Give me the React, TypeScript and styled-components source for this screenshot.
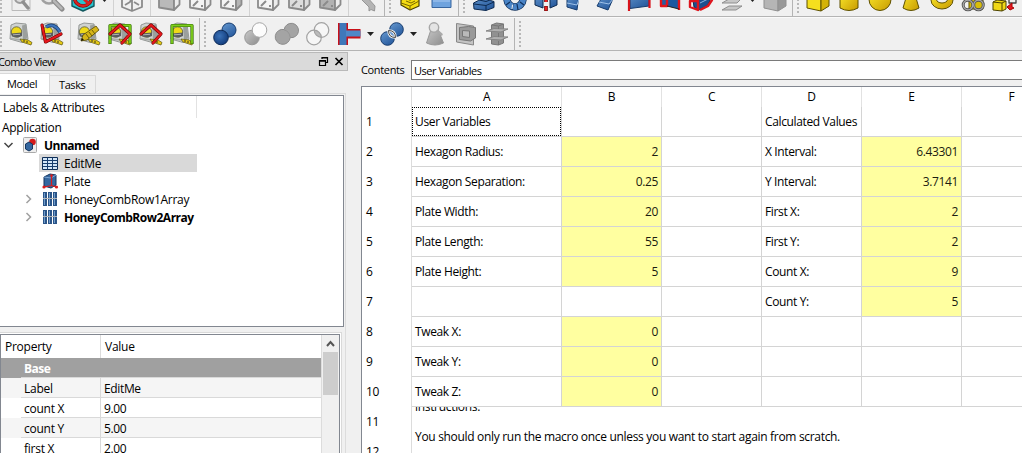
import React from 'react';
import styled, { createGlobalStyle } from 'styled-components';

const Global = createGlobalStyle`
  * { box-sizing: border-box; }
  html, body { margin: 0; height: 100%; overflow: hidden; }
  body { background: #f0f0f0; color: #000; font: 12px/18px "Open Sans", "Noto Sans", sans-serif; letter-spacing: -0.25px; }
`;

const Window = styled.div`
  width: 1022px; height: 453px; overflow: hidden;
  display: flex; flex-direction: column; background: #f0f0f0; white-space: nowrap;
`;

/* ---------- tool bars ---------- */
const ToolBar = styled.div<{ $clipped?: boolean }>`
  display: flex; flex: none; height: 34px;
  margin-top: ${p => (p.$clipped ? '-17px' : '0')};
  border-bottom: 1px solid #b4b4b4;
  border-top: 1px solid #fafafa;
`;
const ToolGroup = styled.div<{ $first?: boolean; $last?: boolean }>`
  display: flex; align-items: center; flex: none; height: 32px;
  padding: 0 ${p => (p.$last ? 0 : 5)}px 0 ${p => (p.$first ? 0 : 4)}px;
  border-right: ${p => (p.$last ? '0' : '1px solid #b4b4b4')};
`;
const Handle = styled.div`
  width: 2px; height: 26px; flex: none;
  background: repeating-linear-gradient(#b8b8b8 0 2px, transparent 2px 4px);
`;
const Separator = styled.div`
  width: 1px; height: 32px; flex: none; margin: 0 -1px 0 6px; background: #d2d2d2;
`;
const IconSvg = styled.svg`
  width: 24px; height: 24px; flex: none; margin-left: 7px; display: block; overflow: visible;
`;
const ArrowSvg = styled.svg`width: 12px; height: 6px; flex: none; overflow: visible;`;

const Icon = ({ children }: { children: React.ReactNode }) => (
  <IconSvg viewBox="0 0 24 24" strokeLinejoin="round">{children}</IconSvg>
);
const Arrow = ({ x = 6 }: { x?: number }) => (
  <ArrowSvg viewBox="0 0 12 6"><path d={`M${x} 1h7l-3.500 4z`} fill="#222" /></ArrowSvg>
);

const Gradients = styled.svg`position: absolute; width: 0; height: 0;`;
const Defs = () => (
  <Gradients>
    <defs>
      <linearGradient id="blue" x1="0" y1="0" x2="0.6" y2="1"><stop offset="0" stopColor="#6699d0" /><stop offset="1" stopColor="#2a5da0" /></linearGradient>
      <radialGradient id="ball" cx="0.4" cy="0.4" r="0.7"><stop offset="0" stopColor="#3a72b8" /><stop offset="1" stopColor="#0d3575" /></radialGradient>
      <linearGradient id="grey" x1="0" y1="0" x2="1" y2="1"><stop offset="0" stopColor="#c9c9c9" /><stop offset="1" stopColor="#8d8d8d" /></linearGradient>
      <linearGradient id="gold" x1="0" y1="0" x2="1" y2="1"><stop offset="0" stopColor="#ffee2e" /><stop offset="1" stopColor="#c79a00" /></linearGradient>
    </defs>
  </Gradients>
);

const Tape = () => (
  <g>
    <path d="M2 3 7 1 17 2 19 17 13 20.500 1 17z" fill="#d0d3d1" stroke="#8b8f8c" strokeWidth=".9" />
    <path d="M13 3.500 17 2.500 18.500 16 14 19z" fill="#9b9f9d" />
    <circle cx="7.500" cy="10" r="5.200" fill="#efd91a" stroke="#57573a" strokeWidth=".8" />
    <path d="M2 11.500 13 10.500v3.500L9 15.500 3 14.500z" fill="#5a5d5f" />
    <path d="M4 12.800 11 12.300" stroke="#c4c7c5" strokeWidth=".8" />
    <path d="M2 16.500 12 18" stroke="#a9adaa" strokeWidth="1.500" />
    <path d="M11 17 19 18 23 20.500 22 23 13 20z" fill="#e6c913" stroke="#595212" strokeWidth=".7" />
    <path d="M15 18v2M18 19v2" stroke="#222" strokeWidth=".9" />
  </g>
);
const RedAngle = ({ d }: { d: string }) => (
  <g fill="none" strokeLinecap="round"><path d={d} stroke="#6d0000" strokeWidth="3.200" /><path d={d} stroke="#e5171c" strokeWidth="2" /></g>
);
const GreenFrame = () => (
  <g fill="none"><path d="M2 22V3.500H22V22" stroke="#2f6b00" strokeWidth="3.200" /><path d="M2 21.600V3.500H22V21.600" stroke="#7fce1c" strokeWidth="1.800" /></g>
);

const WireCube = ({ fill = 'none', dots = false, side = 'none' }: { fill?: string; dots?: boolean; side?: string }) => (
  <g stroke="#8b8b8b" strokeWidth="1.800">
    <path d="M2 5 17 7V22L2 19.500z" fill={fill === 'none' ? '#f4f4f4' : fill} />
    <path d="M17 7 22.500 3V16.500L17 22z" fill={side === 'none' ? '#ececec' : side} />
    {dots && <path d="M5 18 10 13M8 11h5M14 17v2" fill="none" strokeWidth="2" />}
  </g>
);
const BackCube = () => (
  <g stroke="#8b8b8b" strokeWidth="1.800" fill="#f1f1f1">
    <path d="M2 3V19L12 23 22 19V3L12 8z" /><path d="M12 2v20M5 17l5-3 2-5M14 14l5 3" fill="none" />
  </g>
);

const Box = ({ fill, side, stroke }: { fill: string; side: string; stroke: string }) => (
  <g stroke={stroke} strokeWidth="1"><path d="M1 3 15 5V23L1 20z" fill={fill} /><path d="M15 5 23 2V18L15 23z" fill={side} /></g>
);

const TopToolBar = () => (
  <ToolBar $clipped>
    <ToolGroup $first>
      <Handle />
      <Icon><path d="M3 0h18v22.500H3z" fill="#eee" stroke="#bbb" /><circle cx="11" cy="10" r="5" fill="#ddd" stroke="#9b9b9b" strokeWidth="2" /><path d="m14 14 5 6" stroke="#8f8f8f" strokeWidth="3.500" strokeLinecap="round" /></Icon>
      <Icon><circle cx="9" cy="8" r="7.500" fill="#e6e6e6" stroke="#a0a0a0" strokeWidth="2.500" /><path d="m14 13 8 8" stroke="#8c8c8c" strokeWidth="5" strokeLinecap="round" /><path d="m14 13 7.500 7.500" stroke="#b5b5b5" strokeWidth="2.500" strokeLinecap="round" /></Icon>
      <Icon><path d="M1 3 12 0 23 3V18L12 23 1 18z" fill="#28c4cf" stroke="#135a60" strokeWidth="1.400" /><circle cx="12" cy="9.500" r="8.500" fill="none" stroke="#7d0d0d" strokeWidth="3.600" /><circle cx="12" cy="9.500" r="8.500" fill="none" stroke="#d62222" strokeWidth="2.400" /><path d="m5 3 13 13" stroke="#d62222" strokeWidth="3" /></Icon>
      <Arrow />
      <Separator />
      <Icon><BackCube /></Icon>
      <Separator />
      <Icon><WireCube fill="#b9b9b9" /></Icon>
      <Icon><WireCube dots /></Icon>
      <Icon><WireCube dots side="#b5b5b5" /></Icon>
      <Separator />
      <Icon><WireCube dots /></Icon>
      <Icon><WireCube fill="#ddd" side="#ddd" dots /></Icon>
      <Icon><WireCube fill="#b2b2b2" dots /></Icon>
      <Separator />
      <Icon><path d="M6 11 12 9 20 18 19.500 23 16 21.500 14 23 14 19z" fill="#b4b4b4" stroke="#969696" /></Icon>
    </ToolGroup>
    <ToolGroup>
      <Handle />
      <Icon><path d="M3 12 8 10l4 2 4-2 5 2v6l-9 4-9-5z" fill="#f4dc12" stroke="#4c4300" strokeWidth="1.200" /><path d="m3 15 9 3 9-5M12 18v4M8 13l5 2 4-2" fill="none" stroke="#7a6900" /></Icon>
      <Icon><path d="M3 4h19v15.500H3z" fill="#6fa3de" stroke="#37659f" /><path d="M4 13h17" stroke="#8db7e8" strokeWidth="2" /></Icon>
    </ToolGroup>
    <ToolGroup>
      <Handle />
      <Icon><path d="m1.500 15 5-2.500 1-7h10l1 7 3.500 1v6L14 22.500 2 21z" fill="url(#blue)" stroke="#0d2a50" /><path d="m2 16 12 1.500 8-3.500M14 17.500V22M7 12l7 1.500 4-1.500" fill="none" stroke="#0d2a50" /></Icon>
      <Icon><circle cx="12" cy="11" r="8" fill="none" stroke="#12315c" strokeWidth="7.500" /><circle cx="12" cy="11" r="8" fill="none" stroke="#4a84c6" strokeWidth="6" /><path d="m3 17 4-3M21 17l-4-3M10 16l-1 6M14 16l1 6" stroke="#12315c" strokeWidth="1.200" /><path d="M9.600 16.500 9 21" stroke="#dfe9f5" strokeWidth="1.200" /></Icon>
      <Icon><path d="m1 5 8 5v10l-8-3zM23 5l-7 5v10l7-3z" fill="url(#blue)" stroke="#0d2a50" /><path d="M12 0v14M12 18v5" stroke="#680000" strokeWidth="3.600" /><path d="M12 0v14M12 18.500v4" stroke="#ef2020" strokeWidth="2" /></Icon>
      <Icon><path d="M2 5h12l-1 9-1 8-10-3V12z" fill="url(#blue)" stroke="#163c6d" /><path d="m2 15 10 2 2-6" stroke="#9dc0e8" fill="none" /></Icon>
      <Icon><path d="M6 5h11l-1 8-4 9-11-4 4-7z" fill="url(#blue)" stroke="#163c6d" /><path d="m3 14 10 2 4-5" stroke="#9dc0e8" fill="none" /></Icon>
      <Icon><path d="m3 4 19-3v17L3 20.500z" fill="url(#blue)" stroke="#163c6d" /><path d="M2 3v20M22.500 0v20" stroke="#d8131b" strokeWidth="2.200" /></Icon>
      <Icon><path d="M4 4h17v17L4 17z" fill="#1c57a0" /><path d="M3 5h6v13H3zM21 2v20" fill="#2a5da0" stroke="#e0151b" strokeWidth="2.400" /><path d="m9 18 12 3" stroke="#222" /></Icon>
      <Icon><path d="M4 12 13 6l10 2-4 9-9 5-5-3z" fill="#1d4f8f" stroke="#102a50" /><path d="M1 13h8v9l-8-3zM23 4v8l-4 6-8 4" fill="none" stroke="#df151d" strokeWidth="2.400" /><path d="m11 15 8-4" stroke="#8cb6e4" /></Icon>
      <Icon><path d="m2 15 7-4h12l-4 4zM2 22l7-4h13l-6 4z" fill="#c7c7c7" stroke="#8e8e8e" /></Icon>
      <Arrow x={5} />
      <Icon><Box fill="#b5b5b5" side="#989898" stroke="#909090" /></Icon>
    </ToolGroup>
    <ToolGroup $last>
      <Handle />
      <Icon><Box fill="#f5df1e" side="#d4b206" stroke="#5e5000" /></Icon>
      <Icon><path d="M3 2V20q9 5 18 0V2z" fill="url(#gold)" stroke="#5e5000" /></Icon>
      <Icon><circle cx="12" cy="11.500" r="11" fill="url(#gold)" stroke="#5e5000" /></Icon>
      <Icon><path d="M10 0h4l6 20q-8 5-16 0z" fill="url(#gold)" stroke="#5e5000" /></Icon>
      <Icon><ellipse cx="12" cy="12" rx="11" ry="9" fill="url(#gold)" stroke="#5e5000" /><ellipse cx="12" cy="11.500" rx="5.500" ry="3.500" fill="#f0f0f0" stroke="#5e5000" /></Icon>
      <Icon><path d="M8 7h14v14H8z" fill="#d9bd09" stroke="#5e5000" /><g fill="none" stroke="#555" strokeWidth="3"><circle cx="7" cy="17" r="4.800" /><circle cx="17.500" cy="17" r="4.800" /></g><g fill="none" stroke="#a9a9a9" strokeWidth="1.200"><circle cx="7" cy="17" r="4.800" /><circle cx="17.500" cy="17" r="4.800" /></g></Icon>
      <Icon><path d="m1 14 4-2 9 1v8l-4 2-9-1z" fill="#f1d816" stroke="#4c4300" /><path d="m1 14 9 1 4-2M10 15v8" fill="none" stroke="#4c4300" /><path d="M17 8h7v7h-7z" fill="#eee" stroke="#444" strokeWidth="1.300" /><path d="m15 19 5-4v4l2 1-4 2z" fill="#e51720" stroke="#a00" /></Icon>
    </ToolGroup>
  </ToolBar>
);

const BoolToolBar = () => (
  <ToolBar>
    <ToolGroup $first>
      <Handle />
      <Icon><Tape /></Icon>
      <Icon><Tape /><path d="M6 5q8-5 14 5" fill="none" stroke="#173d73" strokeWidth="3.600" /><path d="M6 5q8-5 14 5" fill="none" stroke="#3c75bb" strokeWidth="2.200" /><RedAngle d="M2 3 5.500 20 21 12" /></Icon>
      <Separator />
      <Icon><Tape /><path d="m4 19 2-6L19 4l3 4L10 18z" fill="#d6b519" stroke="#574a00" strokeWidth=".8" /><path d="m9 12 3 4m0-6 3 4m0-6 3 4" stroke="#574a00" strokeWidth=".8" /><path d="m4 19 1-3 2 2z" fill="#111" /></Icon>
      <Icon><Tape /><GreenFrame /><RedAngle d="M2 12 12 3 22 12 14 21" /></Icon>
      <Icon><Tape /><RedAngle d="M2 12 12 3 22 12 14 21" /></Icon>
      <Icon><Tape /><GreenFrame /></Icon>
    </ToolGroup>
    <ToolGroup>
      <Handle />
      <Icon><circle cx="16" cy="8" r="7" fill="url(#blue)" stroke="#173d70" /><circle cx="8" cy="15.500" r="7.300" fill="url(#ball)" stroke="#0e2b58" /></Icon>
      <Icon><circle cx="8" cy="15.500" r="7.300" fill="url(#grey)" stroke="#999" /><circle cx="15.500" cy="8" r="7.300" fill="#fcfcfc" stroke="#a7a7a7" /></Icon>
      <Icon><path d="M9.200 7.500a7.200 7.200 0 1 1 6 8.100 7.500 7.500 0 1 1-6-8.100z" fill="#a4a4a4" stroke="#8c8c8c" /><path d="M9.200 8q5 1 6 7" fill="none" stroke="#959595" /></Icon>
      <Icon><circle cx="15.500" cy="8" r="7.300" fill="#f6f6f6" /><circle cx="8" cy="15.500" r="7.300" fill="#f6f6f6" /><path d="M8.300 8.200a7.300 7.300 0 0 1 7 7.200A7.300 7.300 0 0 1 8.300 8.200z" fill="#bbb" /><g fill="none" stroke="#a2a2a2" strokeWidth="1.200"><circle cx="15.500" cy="8" r="7.300" /><circle cx="8" cy="15.500" r="7.300" /></g></Icon>
      <Icon>
        <path d="M1 1h10v22H1z" fill="#c91018" /><path d="M10 7h13.500v9.500H10z" fill="#c91018" />
        <path d="M2.500 1h7v22h-7z" fill="#3f78ba" /><path d="M9 8.500h14.500v6H9z" fill="#4f88c8" />
      </Icon>
      <Arrow />
      <Icon><circle cx="16.500" cy="7.500" r="6.800" fill="url(#blue)" stroke="#173d70" /><circle cx="7.500" cy="16.500" r="6.800" fill="url(#blue)" stroke="#173d70" /><path d="M8.500 8.500q7 0 7 7-7 0-7-7z" fill="#6a9ad2" stroke="#eee" strokeWidth="2.600" /><path d="M8.500 8.500q7 0 7 7-7 0-7-7z" fill="none" stroke="#222" strokeWidth=".8" /></Icon>
      <Arrow />
      <Icon><path d="m8.500 6-5 15q8.500 4 17 0l-6-15z" fill="url(#grey)" stroke="#999" /><circle cx="11" cy="5.500" r="4.700" fill="#e4e4e4" stroke="#a7a7a7" strokeWidth="1.400" /><path d="m14.500 9 4 3.500" stroke="#aaa" strokeWidth="2.500" strokeLinecap="round" /></Icon>
      <Icon><path d="m2.500 1.500 17 2.500v19L2.500 20z" fill="#c4c4c4" stroke="#888" /><path d="m5.500 5.500 9-1 7 1V16l-5 3-11-1.500z" fill="#999" stroke="#777" /><path d="m8.500 8.500 7 .5v6.500l-7-1z" fill="#bababa" stroke="#777" /></Icon>
      <Icon><path d="m6.500 3 5-2 7 1v19l-5 2-7-1z" fill="#919191" stroke="#777" /><path d="m1 9 8-2.500 14 .5-7 3zM1 17l8-2.500 14 .5-7 3z" fill="#b0b0b0" stroke="#858585" /><path d="m6.500 3 7 1 5-2M13.500 4v3M13.500 11v4M13.500 19v4" fill="none" stroke="#777" /></Icon>
    </ToolGroup>
    <ToolGroup $last><Handle /></ToolGroup>
  </ToolBar>
);

/* ---------- combo view ---------- */
const Workspace = styled.div`display: flex; flex: 1; min-height: 0;`;
const Dock = styled.div`width: 348px; flex: none; display: flex; flex-direction: column; padding-top: 1px;`;
const DockTitle = styled.div`
  height: 19px; flex: none; display: flex; align-items: center; justify-content: space-between;
  background: #dadada; border: 1px solid #b9b9b9; border-left: 0; padding-right: 3px;
  font-size: 11px; letter-spacing: -0.7px;
`;
const DockName = styled.span`margin-left: -2px;`;
const TitleButtons = styled.svg`width: 26px; height: 11px;`;
const Tabs = styled.div`display: flex; align-items: flex-end; height: 20px; margin-top: 2px; flex: none; font-size: 11px; letter-spacing: -0.4px;`;
const Tab = styled.div<{ $active?: boolean }>`
  width: ${p => (p.$active ? 50 : 46)}px; height: ${p => (p.$active ? 21 : 18)}px;
  margin-bottom: ${p => (p.$active ? -1 : 0)}px; padding-left: ${p => (p.$active ? 7 : 9)}px;
  line-height: ${p => (p.$active ? 20 : 18)}px; position: relative;
  background: ${p => (p.$active ? '#fff' : '#f0f0f0')};
  border: solid #d9d9d9; border-width: 1px 1px 0 0;
`;
const TabPage = styled.div`
  width: 346px; flex: 1; min-height: 0; overflow: hidden; display: flex; flex-direction: column;
  border: solid #dcdcdc; border-width: 1px 1px 0 0; padding: 1px 1px 0 0;
`;
const Tree = styled.div`
  height: 232px; flex: none; background: #fff; border: 1px solid #828790; border-left: 0;
`;
const TreeHeader = styled.div`width: 197px; height: 22px; line-height: 23px; padding-left: 3px; border-right: 1px solid #e2e2e2;`;
const TreeRow = styled.div<{ $bold?: boolean; $level: number }>`
  display: flex; height: 18px; line-height: 18px; align-items: center; width: 197px;
  padding-left: ${p => [2, 2, 22][p.$level]}px;
  font-weight: ${p => (p.$bold ? 700 : 400)};
  letter-spacing: ${p => (p.$bold ? -0.5 : -0.28)}px;
`;
const TreeText = styled.span`padding-top: 2px;`;
const TreeLabel = styled.div<{ $selected?: boolean }>`
  display: flex; flex: 1; height: 18px; align-items: center; gap: 5px; padding-left: 3px;
  background: ${p => (p.$selected ? '#d9d9d9' : 'transparent')};
`;
const Chevron = styled.svg`width: 17px; height: 12px; flex: none;`;
const TreeIcon = styled.svg`width: 17px; height: 16px; flex: none;`;

const Expander = ({ open, shown }: { open?: boolean; shown?: boolean }) => (
  <Chevron viewBox="0 0 17 12" fill="none">
    {open ? <path d="m2.500 4 4 4 4-4" stroke="#444" strokeWidth="1.500" /> : shown ? <path d="m4.500 2 4 4-4 4" stroke="#a0a0a0" strokeWidth="1.500" /> : null}
  </Chevron>
);
const SheetIcon = () => (
  <TreeIcon viewBox="0 0 17 16"><path d="M.5 2.500h15v12H.5z" fill="#d3e6f8" stroke="#0f2e56" strokeWidth="1" /><path d="M1 5.500h15M1 8.500h15M1 11.500h15M5.500 2.500v12M10.500 2.500v12" stroke="#163d6e" strokeWidth="1" /></TreeIcon>
);
const PlateIcon = () => (
  <TreeIcon viewBox="0 0 17 16"><path d="m2 4 6-3 6 1v10l-5 3-7-2z" fill="#35679f" stroke="#15355e" /><path d="m2 4 7 1 5-3" fill="none" stroke="#79a4d4" /><path d="M9.500 3v9.500l-7 1.500M9.500 12.500l5 1.500" stroke="#d81b1b" strokeWidth="1.200" fill="none" /><g fill="#d81b1b"><circle cx="9.500" cy="2.500" r="1.300" /><circle cx="2" cy="14" r="1.600" /><circle cx="14.500" cy="14" r="1.600" /></g></TreeIcon>
);
const ArrayIcon = () => (
  <TreeIcon viewBox="0 0 17 16">{[1, 6, 11].map(x => <g key={x}><path d={`M${x} 1h4v14h-4z`} fill="#2b5588" /><path d={`M${x + 1.500} 2v12`} stroke="#6f9ccc" /></g>)}<path d="M1 7.500h14" stroke="#b0b4b8" strokeWidth="1" /></TreeIcon>
);
const DocIcon = () => (
  <TreeIcon viewBox="0 0 17 16"><rect x="1.500" y=".5" width="13" height="15" rx="1" fill="#eee" stroke="#aaa" /><circle cx="10.500" cy="5" r="3.300" fill="#d41b1b" /><path d="m3.500 7 3.500-2 3.500 2v5L7 14l-3.500-2z" fill="#35679f" stroke="#15355e" /></TreeIcon>
);

const PropertyPane = styled.div`
  width: 342px; flex: 1; min-height: 0; margin-top: 5px; padding: 1px 1px 0 0;
  border: solid #d9d9d9; border-width: 1px 1px 0 0; background: #fff;
`;
const PropertyFrame = styled.div`display: flex; height: 100%; overflow: hidden; border: 1px solid #828790; border-bottom: 0;`;
const PropertyTable = styled.div`width: 321px; flex: none; border-right: 1px solid #dcdcdc;`;
const PropertyHeader = styled.div`display: flex; height: 23px; line-height: 24px;`;
const HeadName = styled.div`width: 100px; padding-left: 4px; border-right: 1px solid #dcdcdc;`;
const HeadValue = styled.div`padding-left: 4px;`;
const PropertyRow = styled.div<{ $shade: string; $group?: boolean }>`
  display: flex; height: 20px; padding-left: 20px; background: ${p => p.$shade};
  color: ${p => (p.$group ? '#fff' : '#000')}; font-weight: ${p => (p.$group ? 700 : 400)};
`;
const PropertyName = styled.div<{ $group?: boolean }>`
  width: ${p => (p.$group ? 'auto' : '80px')}; flex: ${p => (p.$group ? 1 : 'none')}; padding-left: 3px; line-height: 21px;
  border: solid #d9d9d9; border-width: 0 ${p => (p.$group ? 0 : 1)}px 1px 0;
  letter-spacing: ${p => (p.$group ? -0.5 : -0.25)}px;
`;
const PropertyValue = styled.div`flex: 1; padding-left: 3px; line-height: 21px; border-bottom: 1px solid #d9d9d9; letter-spacing: -0.35px;`;
const ScrollTrack = styled.div`flex: 1; padding: 0 1px; background: #f0f0f0;`;
const ScrollUp = styled.svg`display: block; width: 15px; height: 17px;`;
const ScrollThumb = styled.div`height: 43px; width: 15px; background: #cdcdcd;`;

const properties = [['Label', 'EditMe'], ['count X', '9.00'], ['count Y', '5.00'], ['first X', '2.00']];

const ComboView = () => (
  <Dock>
    <DockTitle>
      <DockName>Combo View</DockName>
      <TitleButtons viewBox="0 0 26 11" fill="none" stroke="#000"><path d="M4 3V1.500h5.500V6.500H8M4 2h5.500M1.500 4.500h6v5h-6zM1.500 5.200h6" strokeWidth="1.200" /><path d="m17.500 2 7 7M24.500 2l-7 7" strokeWidth="1.700" /></TitleButtons>
    </DockTitle>
    <Tabs><Tab $active>Model</Tab><Tab>Tasks</Tab></Tabs>
    <TabPage>
      <Tree>
        <TreeHeader>Labels &amp; Attributes</TreeHeader>
        <TreeRow $level={0}><TreeText>Application</TreeText></TreeRow>
        <TreeRow $level={1} $bold><Expander open /><TreeLabel><DocIcon /><TreeText>Unnamed</TreeText></TreeLabel></TreeRow>
        <TreeRow $level={2}><Expander /><TreeLabel $selected><SheetIcon /><TreeText>EditMe</TreeText></TreeLabel></TreeRow>
        <TreeRow $level={2}><Expander /><TreeLabel><PlateIcon /><TreeText>Plate</TreeText></TreeLabel></TreeRow>
        <TreeRow $level={2}><Expander shown /><TreeLabel><ArrayIcon /><TreeText>HoneyCombRow1Array</TreeText></TreeLabel></TreeRow>
        <TreeRow $level={2} $bold><Expander shown /><TreeLabel><ArrayIcon /><TreeText>HoneyCombRow2Array</TreeText></TreeLabel></TreeRow>
      </Tree>
      <PropertyPane>
        <PropertyFrame>
          <PropertyTable>
            <PropertyHeader><HeadName>Property</HeadName><HeadValue>Value</HeadValue></PropertyHeader>
            <PropertyRow $shade="#a0a0a0" $group><PropertyName $group>Base</PropertyName></PropertyRow>
            {properties.map(([name, value], i) => (
              <PropertyRow key={name} $shade={i % 2 ? '#fff' : '#f5f5f5'}>
                <PropertyName>{name}</PropertyName><PropertyValue>{value}</PropertyValue>
              </PropertyRow>
            ))}
          </PropertyTable>
          <ScrollTrack>
            <ScrollUp viewBox="0 0 15 17"><path d="m4 11 3.500-4 3.500 4" fill="none" stroke="#555" strokeWidth="2" /></ScrollUp>
            <ScrollThumb />
          </ScrollTrack>
        </PropertyFrame>
      </PropertyPane>
    </TabPage>
  </Dock>
);

/* ---------- spreadsheet ---------- */
const SheetView = styled.div`flex: 1; min-width: 0; display: flex; flex-direction: column; padding: 9px 0 0 13px; overflow: hidden;`;
const ContentsBar = styled.div`display: flex; align-items: center; height: 20px; flex: none; font-size: 11px; letter-spacing: -0.45px;`;
const ContentsLabel = styled.span`width: 50px; flex: none; letter-spacing: -0.35px;`;
const ContentsInput = styled.div`flex: 1; height: 20px; line-height: 19px; padding-left: 2px; background: #fff; border: 1px solid #7a7a7a; border-right: 0;`;
const Sheet = styled.div`flex: 1; min-height: 0; margin-top: 6px; overflow: hidden; background: #fff; border: solid #828790; border-width: 1px 0 0 1px; letter-spacing: -0.36px;`;
const SheetRow = styled.div<{ $head?: boolean }>`
  display: grid; grid-template-columns: 50px 150px repeat(5, 100px); grid-template-rows: 100%;
  height: ${p => (p.$head ? 20 : 30)}px; line-height: ${p => (p.$head ? 19 : 30)}px; width: 700px;
`;
const RowNumber = styled.div`padding-left: 4px; border-right: 1px solid #dcdcdc;`;
const ColumnName = styled.div`text-align: center; border-right: 1px solid #e2e2e2;`;
const Cell = styled.div<{ $yellow?: boolean }>`
  padding: 0 ${p => (p.$yellow ? 3 : 0)}px 0 3px; text-align: ${p => (p.$yellow ? 'right' : 'left')};
  color: ${p => (p.$yellow ? '#1c1c10' : '#000')};
  background: ${p => (p.$yellow ? '#ffffa0' : '#fff')};
  border: solid #d4d4d4; border-width: 0 1px 1px 0;
`;
const FocusFrame = styled.div`height: 29px; margin-left: -3px; padding-left: 2px; border: 1px dotted #000; line-height: 28px;`;
const NoteTail = styled.div`line-height: 18px; margin-top: -9px; height: 18px;`;
const NoteRow = styled.div`display: grid; grid-template-columns: 50px 1fr; height: 60px;`;
const NoteNumbers = styled.div`line-height: 30px; padding-left: 4px; border-right: 1px solid #dcdcdc;`;
const NoteText = styled.div`padding: 0 0 0 3px; line-height: 18px; overflow: hidden; letter-spacing: -0.315px;`;
const NoteLine = styled.div`margin-top: 12px;`;

const rows: string[][] = [
  ['User Variables', '', '', 'Calculated Values', ''],
  ['Hexagon Radius:', '2', '', 'X Interval:', '6.43301'],
  ['Hexagon Separation:', '0.25', '', 'Y Interval:', '3.7141'],
  ['Plate Width:', '20', '', 'First X:', '2'],
  ['Plate Length:', '55', '', 'First Y:', '2'],
  ['Plate Height:', '5', '', 'Count X:', '9'],
  ['', '', '', 'Count Y:', '5'],
  ['Tweak X:', '0', '', '', ''],
  ['Tweak Y:', '0', '', '', ''],
  ['Tweak Z:', '0', '', '', ''],
];

const Spreadsheet = () => (
  <SheetView>
    <ContentsBar><ContentsLabel>Contents</ContentsLabel><ContentsInput>User Variables</ContentsInput></ContentsBar>
    <Sheet>
      <SheetRow $head>
        <RowNumber />
        {['A', 'B', 'C', 'D', 'E', 'F'].map(c => <ColumnName key={c}>{c}</ColumnName>)}
      </SheetRow>
      {rows.map((cells, r) => (
        <SheetRow key={r}>
          <RowNumber>{r + 1}</RowNumber>
          {[...cells, ''].map((text, c) => (
            <Cell key={c} $yellow={text !== '' && (c === 1 || c === 4)}>
              {r === 0 && c === 0 ? <FocusFrame>{text}</FocusFrame> : text}
            </Cell>
          ))}
        </SheetRow>
      ))}
      <NoteRow>
        <NoteNumbers>11<br />12</NoteNumbers>
        <NoteText><NoteTail>instructions.</NoteTail><NoteLine>You should only run the macro once unless you want to start again from scratch.</NoteLine></NoteText>
      </NoteRow>
    </Sheet>
  </SheetView>
);

export default function App() {
  return (
    <Window>
      <Global />
      <Defs />
      <TopToolBar />
      <BoolToolBar />
      <Workspace><ComboView /><Spreadsheet /></Workspace>
    </Window>
  );
}
